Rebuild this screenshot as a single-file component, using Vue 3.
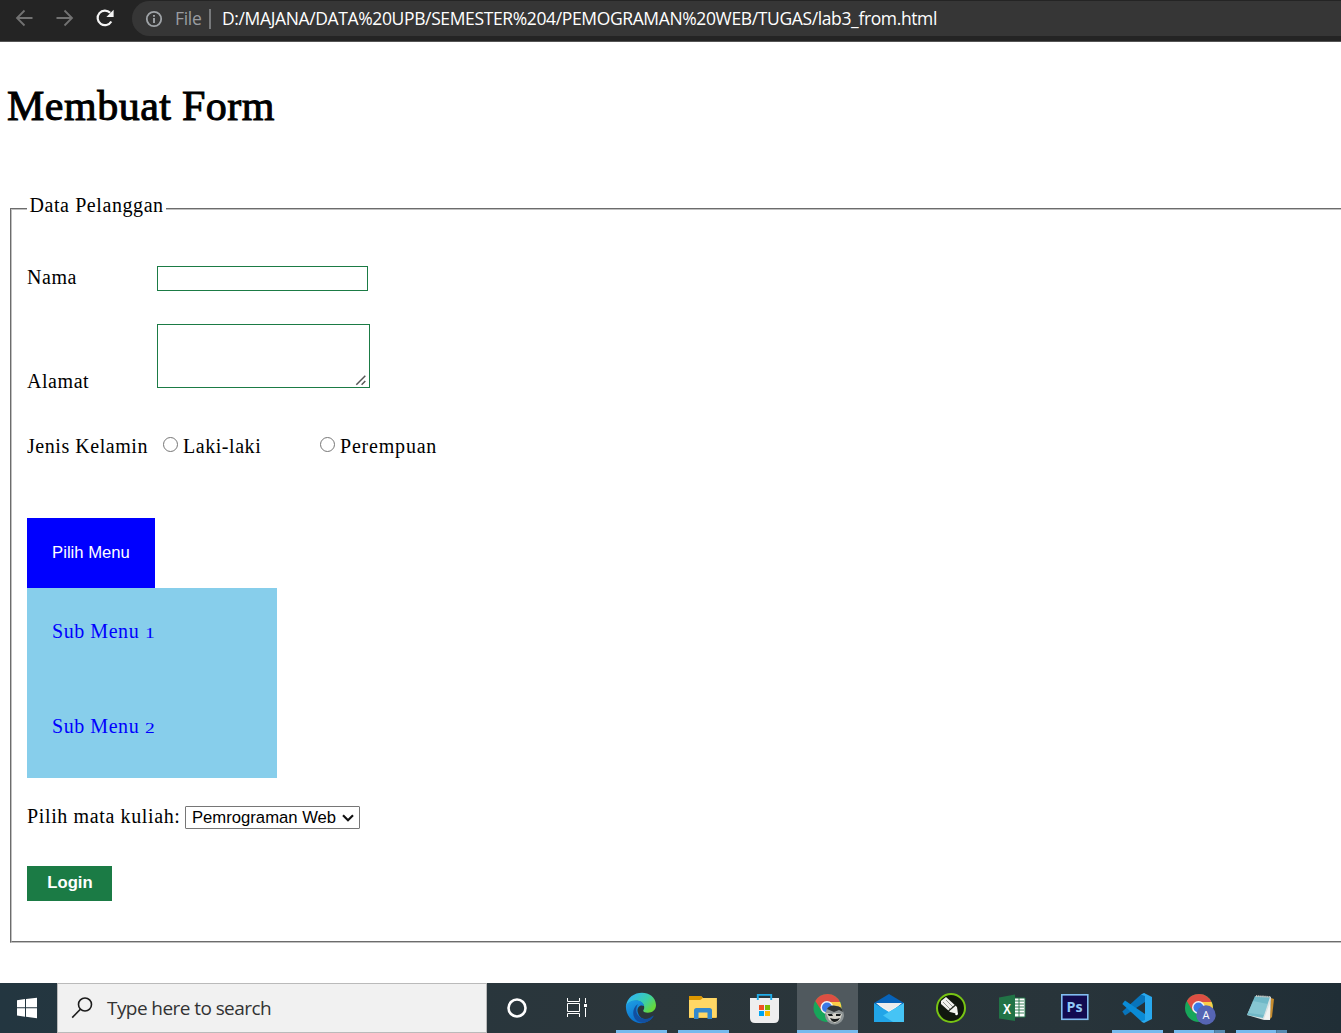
<script setup>
import { ref } from 'vue'

const nama = ref('')
const alamat = ref('')
const kelamin = ref('')
const subMenus = [1, 2]
</script>

<template>
  <div class="screen">
    <header class="browser-bar">
      <svg class="nav-icons" width="132" height="41" viewBox="0 0 132 41" fill="none">
        <g stroke="#727272" stroke-width="1.8">
          <path d="M32.5 18H17.5M24.5 10.5L17 18L24.5 25.500" />
          <path d="M56.500 18H71.500M64.500 10.500L72 18L64.500 25.500" />
        </g>
        <path d="M111.300 21.500A7.300 7.300 0 1 1 110.200 12.800" stroke="#f4f4f4" stroke-width="2.200" />
        <path d="M113.600 9.800V17H106.400Z" fill="#f4f4f4" />
      </svg>
      <div class="address">
        <svg class="info" width="18" height="18" viewBox="0 0 18 18" fill="none">
          <circle cx="9" cy="9" r="7.200" stroke="#a0a4a8" stroke-width="1.800" />
          <path d="M9 8V13M9 5V6.800" stroke="#a0a4a8" stroke-width="1.900" />
        </svg>
        <span class="scheme">File</span>
        <span class="divider"></span>
        <span class="url">D:/MAJANA/DATA%20UPB/SEMESTER%204/PEMOGRAMAN%20WEB/TUGAS/lab3_from.html</span>
      </div>
    </header>

    <main class="page">
      <h1>Membuat Form</h1>
      <fieldset>
        <legend>Data Pelanggan</legend>
        <div class="row row-nama">
          <label for="nama">Nama</label>
          <input id="nama" v-model="nama" type="text" />
        </div>
        <div class="row row-alamat">
          <label for="alamat">Alamat</label>
          <div class="area">
            <textarea id="alamat" v-model="alamat"></textarea>
            <svg class="grip" width="12" height="12" viewBox="0 0 12 12" fill="none">
              <path d="M1.300 10.700L10.300 1.700M6.600 10.700L10.300 7" stroke="#555" stroke-width="1.500" />
            </svg>
          </div>
        </div>
        <div class="row row-gender">
          <span class="caption">Jenis Kelamin</span>
          <label class="choice"><input v-model="kelamin" type="radio" value="L" />Laki-laki</label>
          <label class="choice wide"><input v-model="kelamin" type="radio" value="P" />Perempuan</label>
        </div>
        <button type="button" class="menu-button">Pilih Menu</button>
        <nav class="submenu">
          <a v-for="n in subMenus" :key="n">Sub Menu <span class="numeral">{{ n }}</span></a>
        </nav>
        <div class="row row-course">
          <span class="course-label">Pilih mata kuliah:</span>
          <div class="select">
            <span>Pemrograman Web</span>
            <svg width="12" height="8" viewBox="0 0 12 8" fill="none">
              <path d="M1 1.300L6 6.200L11 1.300" stroke="#111" stroke-width="2.200" />
            </svg>
          </div>
        </div>
        <button type="button" class="login">Login</button>
      </fieldset>
    </main>

    <footer class="taskbar">
      <div class="start">
        <svg width="57" height="50" viewBox="0 983 57 50" fill="#fff">
          <path d="M17 1000.200L25 999.100V1007.300H17ZM26 998.900L37 997.700V1007.300H26ZM17 1008.300H25V1016.700L17 1015.600ZM26 1008.300H37V1018.200L26 1016.800Z" />
        </svg>
      </div>
      <div class="search">
        <svg width="24" height="24" viewBox="70 996 24 24" fill="none" stroke="#1c1c1c" stroke-width="1.600">
          <circle cx="85" cy="1004.500" r="6.500" />
          <path d="M80.400 1009.200L72.200 1017.600" />
        </svg>
        <span>Type here to search</span>
      </div>
      <div class="system">
        <svg width="60" height="50" viewBox="487 983 60 50" fill="none">
          <circle cx="517" cy="1008" r="8.500" stroke="#fff" stroke-width="2.600" />
        </svg>
        <svg width="60" height="50" viewBox="547 983 60 50" fill="none" stroke="#fff">
          <path d="M567.500 998V1001.500H579.500V998M567.500 1017V1013.500H579.500V1017M567.500 1003.500H579.500V1011.500H567.500ZM585.500 998V1003M585.500 1008V1017" />
          <rect x="584" y="1004" width="3" height="3" fill="#fff" stroke="none" />
        </svg>
      </div>

      <div class="app running">
        <svg width="61" height="50" viewBox="611 983 61 50">
          <defs>
            <linearGradient id="edge-top" x1="0" y1="0" x2="1" y2=".6"><stop offset=".2" stop-color="#32b9ed" /><stop offset=".65" stop-color="#3bcfa8" /><stop offset="1" stop-color="#66d83b" /></linearGradient>
            <linearGradient id="edge-side" x1="0" y1="0" x2=".6" y2="1"><stop offset="0" stop-color="#1fa0e4" /><stop offset="1" stop-color="#0869c8" /></linearGradient>
          </defs>
          <path d="M626 1006C628 989 655 988 656 1005C656 1012 649 1014 644 1012C642 1010 645 1010 644 1006C642 999 631 999 626 1006Z" fill="url(#edge-top)" />
          <path d="M626 1005C631 998 643 999 644 1006C640 1004 636 1008 638 1013C640 1020 648 1021 653 1017C648 1024 638 1025 632 1020C627 1016 625.500 1010 626 1005Z" fill="url(#edge-side)" />
          <path d="M638 1004C634 1011 637 1018 645 1019C649 1019 652 1016 654 1015.500C650 1023 641 1025 636 1020C632 1016 632 1008 638 1004Z" fill="#124f9f" />
        </svg>
      </div>
      <div class="app running">
        <svg width="61" height="50" viewBox="673 983 61 50">
          <path d="M689 996H701L703 998H716.700V1018H689Z" fill="#f6c445" />
          <path d="M689 996H701L703 998L700 1000H689Z" fill="#dc9700" />
          <path d="M689 1000H701L703 998H716.700V1017H689Z" fill="#ffd765" />
          <path d="M694 1019V1010.500Q694 1008 696.500 1008H709.500Q712 1008 712 1010.500V1019H707.500V1012.500H698.500V1019Z" fill="#3488cc" />
        </svg>
      </div>
      <div class="app">
        <svg width="61" height="50" viewBox="735 983 61 50">
          <path d="M750 998H779V1018Q779 1023 774 1023H755Q750 1023 750 1018Z" fill="#eeeeef" />
          <path d="M757.800 1000V994.900H771.200V1000" fill="none" stroke="#20ade9" stroke-width="1.900" />
          <path d="M759 1005H764V1010H759Z" fill="#f25022" />
          <path d="M765 1005H770V1010H765Z" fill="#7fba00" />
          <path d="M759 1011H764V1016H759Z" fill="#00a4ef" />
          <path d="M765 1011H770V1016H765Z" fill="#ffb900" />
        </svg>
      </div>
      <div class="app active">
        <svg width="61" height="50" viewBox="797 983 61 50">
          <circle cx="827.500" cy="1008" r="14" fill="#17a65a" />
          <path d="M815.300 1001A14 14 0 0 1 840 1002H828L822 1011.500Z" fill="#dd4f43" />
          <path d="M828 1002H840.100A14 14 0 0 1 828 1022L834 1010Z" fill="#fccd47" />
          <circle cx="827" cy="1007.500" r="6.500" fill="#f4f4f4" />
          <circle cx="827" cy="1007.500" r="5" fill="#3b78e7" />
          <circle cx="834.500" cy="1015" r="9.500" fill="#8d9495" />
          <path d="M827 1009Q830 1004 836 1006Q842 1006 843 1012L839 1010L834 1012Z" fill="#303536" />
          <path d="M826 1013L832 1014L835 1013L842 1014L840 1020L835 1023L829 1020Z" fill="#d6d5cc" />
          <path d="M827.500 1014H832L833 1016H829ZM836 1014H841L840 1016H836ZM830 1018Q835 1020 840 1018Q838 1022 834 1022Q831 1021 830 1018Z" fill="#171b1b" />
        </svg>
      </div>
      <div class="app">
        <svg width="61" height="50" viewBox="859 983 61 50">
          <path d="M874 1003L889 994L904 1003L889 1013Z" fill="#0763b9" />
          <path d="M876 1003H902L889 1014Z" fill="#f3f3f3" />
          <path d="M874 1003L889 1012L904 1003V1022H874Z" fill="#21a5e8" />
          <path d="M877 1003H901L889 1011Z" fill="#ececec" />
          <path d="M904 1003L883 1015.500L893 1022H904Z" fill="#45c4f5" />
        </svg>
      </div>
      <div class="app">
        <svg width="61" height="50" viewBox="921 983 61 50">
          <circle cx="951" cy="1008" r="14" fill="#10170e" stroke="#78c414" stroke-width="2" />
          <path d="M941 1001L946 997L957 1007L958 1014L950 1012L941 1004Z" fill="#f1f1ee" />
          <path d="M943 1002L950 1009M946 1000L953 1007" stroke="#7b8078" stroke-width=".8" />
          <path d="M948.500 1011L955.500 1005" stroke="#20271d" stroke-width="1.300" />
          <circle cx="956.500" cy="1014" r="1.300" fill="#fff" />
        </svg>
      </div>
      <div class="app">
        <svg width="61" height="50" viewBox="983 983 61 50">
          <path d="M1013 998H1025V1017H1013Z" fill="#fff" stroke="#217346" />
          <path d="M1019 998V1017M1014 1001H1024M1014 1004H1024M1014 1007H1024M1014 1010H1024M1014 1013H1024" stroke="#217346" stroke-width=".9" />
          <path d="M999 997.500L1015 994.500V1021L999 1018.500Z" fill="#217346" />
          <text x="1003" y="1013.500" class="excel" textLength="8" lengthAdjust="spacingAndGlyphs">X</text>
        </svg>
      </div>
      <div class="app">
        <svg width="61" height="50" viewBox="1045 983 61 50">
          <rect x="1061.800" y="994.800" width="26" height="24.500" fill="#120b50" stroke="#82bdf1" stroke-width="1.600" />
          <text x="1066.500" y="1012" class="ps" textLength="16" lengthAdjust="spacingAndGlyphs">Ps</text>
        </svg>
      </div>
      <div class="app running">
        <svg width="61" height="50" viewBox="1107 983 61 50">
          <path d="M1122.300 1011.500L1141 994.500L1145 993V1002L1125 1015.500Z" fill="#0874bb" />
          <path d="M1122.300 1004L1125 1000.500L1145 1014V1022L1141 1021Z" fill="#0a8bd6" />
          <path d="M1144 993L1152 997V1019L1144 1023L1141 1021.500L1145 1020V996L1141 994.500Z" fill="#28a8ee" />
        </svg>
      </div>
      <div class="app running grouped">
        <svg width="61" height="50" viewBox="1169 983 61 50">
          <circle cx="1199" cy="1008" r="14" fill="#17a65a" />
          <path d="M1186.800 1001A14 14 0 0 1 1211.500 1002H1199L1193 1011.500Z" fill="#dd4f43" />
          <path d="M1199 1002H1211.600A14 14 0 0 1 1199 1022L1205 1010Z" fill="#fccd47" />
          <circle cx="1198.500" cy="1007.500" r="6.500" fill="#f4f4f4" />
          <circle cx="1198.500" cy="1007.500" r="5" fill="#3b78e7" />
          <circle cx="1206" cy="1015" r="9.700" fill="#5665b4" />
          <text x="1206" y="1019" text-anchor="middle" class="profile">A</text>
        </svg>
      </div>
      <div class="app running grouped">
        <svg width="61" height="50" viewBox="1231 983 61 50">
          <path d="M1271 998L1274 999L1272 1017L1269 1020Z" fill="#c58b2e" />
          <path d="M1256 996L1271 997L1270 1020L1264 1020L1247 1015Z" fill="#dbe3e3" />
          <path d="M1255 996L1270 997L1263 1018L1247 1015Z" fill="#70b8c7" />
          <path d="M1253 1001L1268 1004L1264 1015L1248 1013Z" fill="#9cd4de" opacity=".5" />
          <path d="M1256 996L1271 997" stroke="#c7c7c0" stroke-width="1.800" stroke-dasharray="1.300 .8" />
          <path d="M1264 1019L1270 1003V1020Z" fill="#f3f4f2" />
        </svg>
      </div>
    </footer>
  </div>
</template>

<style>
body {
  margin: 0;
  overflow: hidden;
}
</style>

<style scoped>
.screen {
  width: 1341px;
  height: 1033px;
  display: flex;
  flex-direction: column;
  overflow: hidden;
  background: #fff;
  color: #000;
  font-family: "Liberation Serif", serif;
  font-size: 20px;
}
.browser-bar {
  box-sizing: border-box;
  height: 42px;
  flex: none;
  display: flex;
  background: #242424;
  border-bottom: 1px solid #555;
}
.nav-icons { flex: none; }
.address {
  box-sizing: border-box;
  flex: 1;
  height: 35px;
  margin-top: 1px;
  padding-left: 13px;
  display: flex;
  align-items: center;
  border-radius: 18px 0 0 18px;
  background: #363636;
  font-family: "Open Sans", sans-serif;
  font-size: 17.5px;
  line-height: 24px;
  white-space: nowrap;
}
.scheme { width: 34px; margin: 0 0 2px 12px; color: #9a9da1; letter-spacing: -.3px; }
.divider { width: 2px; height: 20px; margin-right: 11px; background: #77797b; }
.url { margin-bottom: 2px; color: #fff; letter-spacing: -.37px; }
.page { flex: 1; }
h1 {
  margin: 39px 0 0 7px;
  height: 116px;
  font-size: 42px;
  line-height: 50px;
  font-weight: 400;
  letter-spacing: .5px;
  word-spacing: -.5px;
  -webkit-text-stroke: 1px #000;
}
fieldset {
  box-sizing: border-box;
  width: 1400px;
  height: 746px;
  margin: 0 0 0 10px;
  padding: 0 15px;
  border: 2px groove #c0c0c0;
  letter-spacing: .55px;
  line-height: 24px;
}
legend { padding: 0 2.5px 8px; line-height: 16px; letter-spacing: .58px; }
.row { display: flex; }
.row-nama { height: 26px; margin-top: 44px; }
.row-nama label, .row-alamat label { width: 130px; }
.row-nama input {
  box-sizing: border-box;
  width: 211px;
  height: 25px;
  margin: 1px 0 0;
  border: 1px solid #1b7b45;
}
.row-alamat { height: 69px; margin-top: 33px; }
.row-alamat label { align-self: flex-end; }
.area { position: relative; width: 213px; height: 64px; }
textarea {
  display: block;
  box-sizing: border-box;
  width: 213px;
  height: 64px;
  margin: 0;
  border: 1px solid #1b7b45;
  resize: none;
}
.grip { position: absolute; right: 3px; bottom: 2px; }
.row-gender { height: 24px; margin-top: 41px; }
.caption { width: 136px; }
.choice { display: flex; width: 157px; white-space: nowrap; }
.choice input {
  appearance: none;
  box-sizing: border-box;
  flex: none;
  width: 15px;
  height: 15px;
  margin: 3px 5px 0 0;
  border: 1px solid #767676;
  border-radius: 50%;
}
.wide { letter-spacing: .8px; }
.menu-button {
  display: block;
  width: 128px;
  height: 70px;
  margin: 60px 0 0;
  padding: 0;
  border: 0;
  background: #00f;
  color: #fff;
  font: 16.67px "Liberation Sans", Arial, sans-serif;
}
.submenu { width: 250px; background: skyblue; }
.submenu a {
  display: block;
  box-sizing: border-box;
  height: 95px;
  padding: 31px 25px 0;
  color: #00f;
}
.numeral { display: inline-block; font-size: 15px; line-height: 1; transform: scaleX(1.3); transform-origin: left; }
.row-course { height: 26px; margin-top: 26px; }
.course-label { width: 158px; letter-spacing: .63px; }
.select {
  box-sizing: border-box;
  width: 175px;
  height: 23px;
  margin-top: 2px;
  padding: 0 5px 0 6px;
  display: flex;
  align-items: center;
  justify-content: space-between;
  border: 1px solid #767676;
  border-radius: 1px;
  font: 16.67px "Liberation Sans", Arial, sans-serif;
  letter-spacing: 0;
}
.login {
  display: block;
  width: 85px;
  height: 35px;
  margin: 36px 0 0;
  padding: 0 0 2px 1px;
  border: 0;
  background: #1b7b45;
  color: #fff;
  font: bold 16.67px "Liberation Sans", Arial, sans-serif;
}
.taskbar {
  height: 50px;
  flex: none;
  display: flex;
  background: linear-gradient(90deg, #233640, #2b363b 48%, #28343a 80%, #202e36);
}
.taskbar svg { display: block; }
.start { width: 57px; }
.search {
  box-sizing: border-box;
  width: 430px;
  padding-left: 12px;
  display: flex;
  align-items: center;
  border: 1px solid #bababa;
  background: #f1f1f1;
  color: #333;
  font-family: "Open Sans", sans-serif;
  font-size: 19px;
}
.search span { margin-left: 13px; letter-spacing: -.57px; }
.system { display: flex; width: 124px; }
.app { position: relative; width: 61px; margin-right: 1px; }
.active { background: #50595e; }
.running::after, .active::after {
  content: "";
  position: absolute;
  left: 5px;
  bottom: 0;
  width: 51px;
  height: 3px;
  background: #76b9ed;
}
.active::after { left: 0; width: 61px; }
.grouped::after { background: linear-gradient(90deg, #76b9ed 40px, #41657f 40px, #5689b0 41px); }
.excel { font: bold 15px "Liberation Sans", sans-serif; fill: #fff; }
.ps { font: bold 15px "Open Sans", sans-serif; fill: #91c9f7; }
.profile { font: 11px "Open Sans", sans-serif; fill: #fff; }
</style>
